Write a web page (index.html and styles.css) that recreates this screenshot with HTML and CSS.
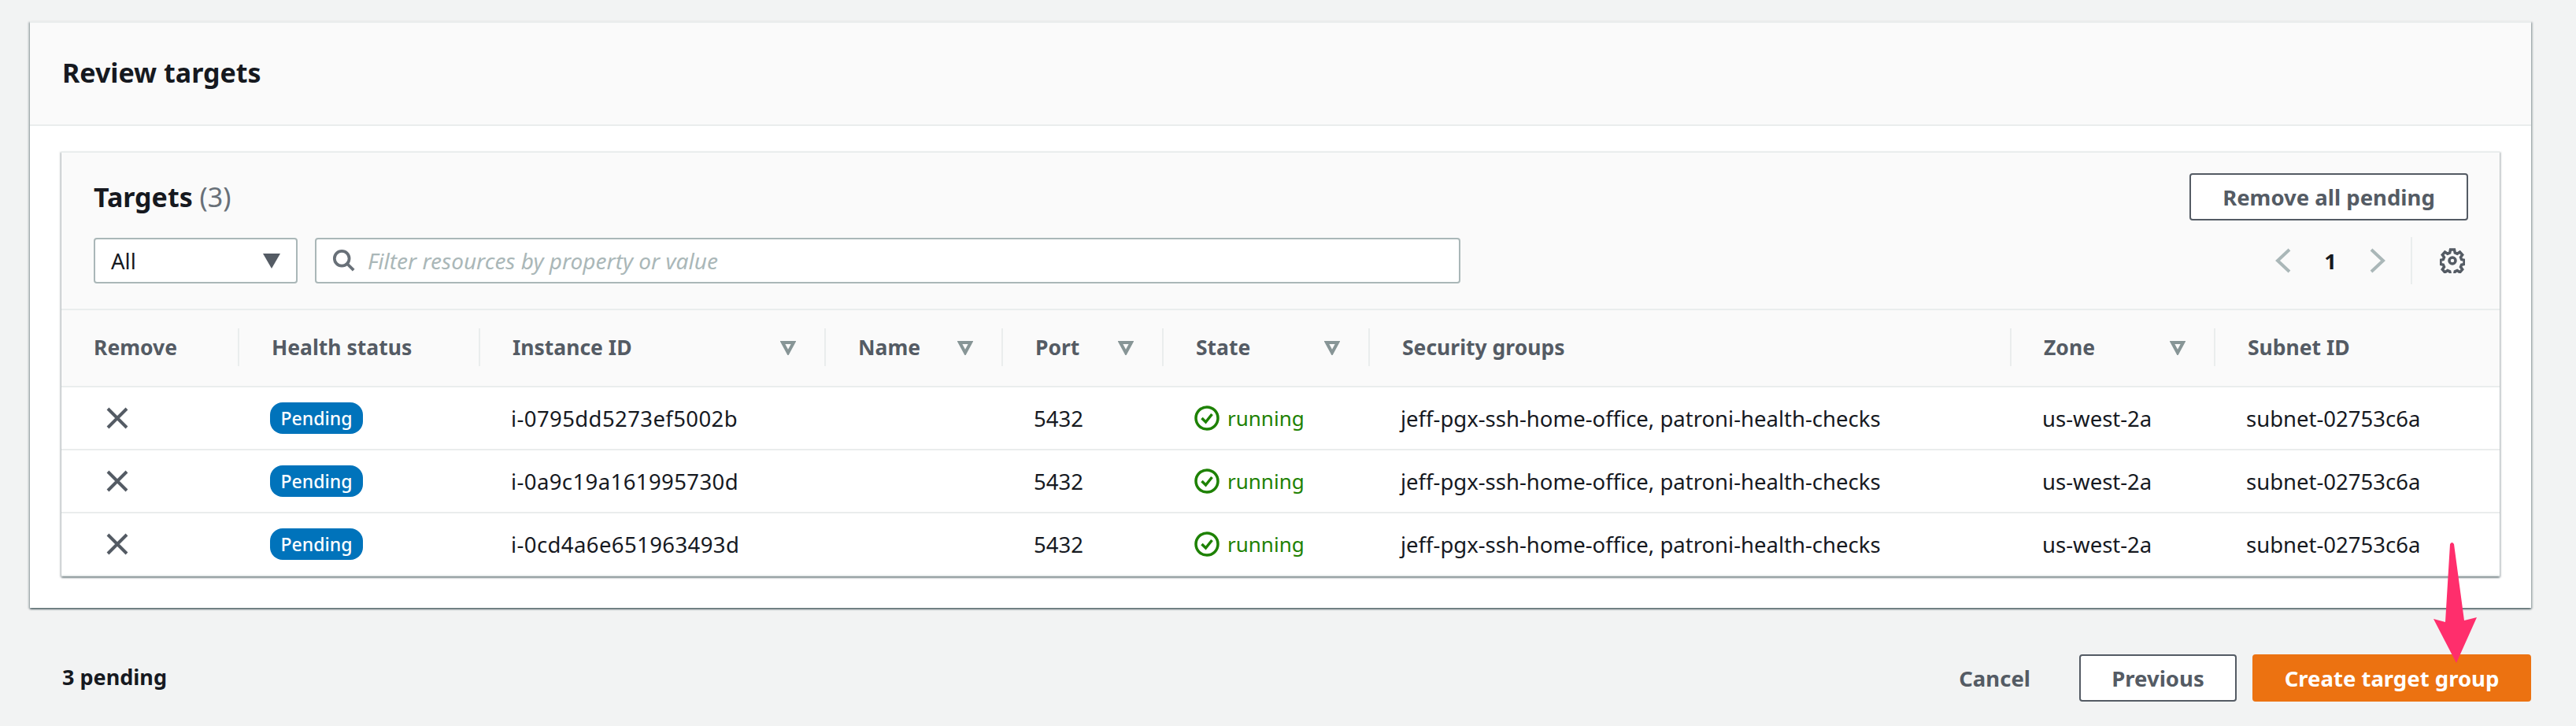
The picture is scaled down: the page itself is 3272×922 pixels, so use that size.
FILE: index.html
```html
<!DOCTYPE html>
<html lang="en">
<head>
    <meta charset="UTF-8">
    <title>Review targets</title>
    <link rel="stylesheet" href="styles.css">
</head>
<body>

    <section class="card">
        <h2 class="card-title">Review targets</h2>
        <div class="card-body">
            <div class="targets">
                <div class="toolbar">
                    <div class="toolbar-top">
                        <h3 class="targets-title">Targets <span class="count">(3)</span></h3>
                        <button class="btn btn-small">Remove all pending</button>
                    </div>
                    <div class="toolbar-bottom">
                        <div class="select">All<span class="select-caret"></span></div>
                        <div class="search">
                            <svg class="search-icon" viewBox="0 0 32 32"><circle cx="13" cy="13" r="10" /><path d="M20 20l9 9" /></svg>
                            <span class="placeholder">Filter resources by property or value</span>
                        </div>
                        <div class="pager">
                            <svg class="chevron" viewBox="0 0 20 32"><path d="M18 2L3 16l15 14" /></svg>
                            <span class="page-num">1</span>
                            <svg class="chevron" viewBox="0 0 20 32"><path d="M2 2l15 14L2 30" /></svg>
                            <span class="pager-sep"></span>
                            <svg class="gear" viewBox="0 0 32 32">
                                <path d="M13.5 2h5l.8 4 2.8 1.2 3.4-2.2 3.2 3.6-2.2 3.2 1.1 2.8 3.4.8v5l-3.4.8-1.1 2.8 2.2 3.2-3.2 3.6-3.4-2.2-2.8 1.2-.8 3.900h-5l-.8-3.900-2.8-1.2-3.4 2.2-3.2-3.6 2.2-3.2-1.1-2.8-3.4-.8v-5l3.400-.8 1.100-2.800-2.200-3.200 3.200-3.600 3.400 2.200 2.800-1.200z" />
                                <circle cx="16" cy="16" r="4" />
                            </svg>
                        </div>
                    </div>
                </div>
                <table class="table">
                    <colgroup>
                        <col class="col-remove">
                        <col class="col-health">
                        <col class="col-instance">
                        <col class="col-name">
                        <col class="col-port">
                        <col class="col-state">
                        <col class="col-groups">
                        <col class="col-zone">
                        <col class="col-subnet">
                    </colgroup>
                    <thead>
                        <tr>
                            <th><div class="th-in">Remove</div></th>
                            <th><div class="th-in">Health status</div></th>
                            <th><div class="th-in">Instance ID<svg class="sort" viewBox="0 0 20 20"><path d="M3 4h14l-7 13z" /></svg></div></th>
                            <th><div class="th-in">Name<svg class="sort" viewBox="0 0 20 20"><path d="M3 4h14l-7 13z" /></svg></div></th>
                            <th><div class="th-in">Port<svg class="sort" viewBox="0 0 20 20"><path d="M3 4h14l-7 13z" /></svg></div></th>
                            <th><div class="th-in">State<svg class="sort" viewBox="0 0 20 20"><path d="M3 4h14l-7 13z" /></svg></div></th>
                            <th><div class="th-in">Security groups</div></th>
                            <th><div class="th-in">Zone<svg class="sort" viewBox="0 0 20 20"><path d="M3 4h14l-7 13z" /></svg></div></th>
                            <th><div class="th-in th-last">Subnet ID</div></th>
                        </tr>
                    </thead>
                    <tbody>
                        <tr>
                            <td><svg class="remove" viewBox="0 0 28 28"><path d="M2 2l24 24M26 2L2 26" /></svg></td>
                            <td><span class="badge">Pending</span></td>
                            <td class="instance">i-0795dd5273ef5002b</td>
                            <td></td>
                            <td>5432</td>
                            <td><span class="state"><svg class="check" viewBox="0 0 32 32"><circle cx="16" cy="16" r="14" /><path d="M9.5 16l5 5 8-10" /></svg>running</span></td>
                            <td>jeff-pgx-ssh-home-office, patroni-health-checks</td>
                            <td>us-west-2a</td>
                            <td>subnet-02753c6a</td>
                        </tr>
                        <tr>
                            <td><svg class="remove" viewBox="0 0 28 28"><path d="M2 2l24 24M26 2L2 26" /></svg></td>
                            <td><span class="badge">Pending</span></td>
                            <td class="instance">i-0a9c19a161995730d</td>
                            <td></td>
                            <td>5432</td>
                            <td><span class="state"><svg class="check" viewBox="0 0 32 32"><circle cx="16" cy="16" r="14" /><path d="M9.5 16l5 5 8-10" /></svg>running</span></td>
                            <td>jeff-pgx-ssh-home-office, patroni-health-checks</td>
                            <td>us-west-2a</td>
                            <td>subnet-02753c6a</td>
                        </tr>
                        <tr>
                            <td><svg class="remove" viewBox="0 0 28 28"><path d="M2 2l24 24M26 2L2 26" /></svg></td>
                            <td><span class="badge">Pending</span></td>
                            <td class="instance">i-0cd4a6e651963493d</td>
                            <td></td>
                            <td>5432</td>
                            <td><span class="state"><svg class="check" viewBox="0 0 32 32"><circle cx="16" cy="16" r="14" /><path d="M9.5 16l5 5 8-10" /></svg>running</span></td>
                            <td>jeff-pgx-ssh-home-office, patroni-health-checks</td>
                            <td>us-west-2a</td>
                            <td>subnet-02753c6a</td>
                        </tr>
                    </tbody>
                </table>
            </div>
        </div>
    </section>

    <footer class="footer">
        <span class="pending">3 pending</span>
        <div class="actions">
            <span class="btn-link">Cancel</span>
            <button class="btn btn-prev">Previous</button>
            <button class="btn btn-primary">Create target group</button>
        </div>
    </footer>

    <!-- annotation arrow drawn on top of the screenshot -->
    <svg class="arrow" viewBox="0 0 60 156"><path d="M22 2Q24.500-2 27 2L40 99 56 95 30 153 1 97 16 101z" /></svg>

</body>
</html>
```

FILE: styles.css
```css
* {
    box-sizing: border-box;
}
body {
    margin: 0;
    height: 922px;
    overflow: hidden;
    background-color: #f2f3f3;
    color: #16191f;
    font-family: "Noto Sans", Roboto, sans-serif;
    font-size: 27.5px;
    padding: 27px 57px 0 38px;
    position: relative;
}
button {
    font-family: inherit;
}
.card {
    background-color: #fff;
    border-top: 2px solid #eaeded;
    box-shadow: 0 2px 2px rgba(0, 28, 36, 0.5), 2px 1px 2px rgba(0, 28, 36, 0.2), -2px 1px 2px rgba(0, 28, 36, 0.2);
    height: 745px;
}
.card-title {
    margin: 0;
    height: 131px;
    padding: 0 41px 3px 41px;
    display: flex;
    align-items: center;
    background-color: #fafafa;
    border-bottom: 2px solid #eaeded;
    font-size: 34px;
    font-weight: 700;
}
.card-body {
    padding: 32px 40px 0 40px;
}
.targets {
    border-top: 2px solid #eaeded;
    box-shadow: 0 2px 2px rgba(0, 28, 36, 0.4), 2px 1px 2px rgba(0, 28, 36, 0.15), -2px 1px 2px rgba(0, 28, 36, 0.15);
}
.toolbar {
    background-color: #fafafa;
    height: 198px;
    padding: 26px 40px 0 41px;
}
.toolbar-top {
    display: flex;
    justify-content: space-between;
    align-items: center;
    height: 60px;
}
.targets-title {
    margin: 0;
    font-size: 34px;
    font-weight: 700;
}
.count {
    font-weight: 400;
    color: #687078;
}
.btn {
    height: 60px;
    background-color: #fff;
    border: 2px solid #545b64;
    border-radius: 4px;
    color: #545b64;
    font-size: 27.5px;
    font-weight: 700;
}
.btn-small {
    width: 354px;
}
.toolbar-bottom {
    display: flex;
    align-items: center;
    margin-top: 21px;
}
.select {
    width: 259px;
    height: 58px;
    padding: 0 20px;
    display: flex;
    align-items: center;
    justify-content: space-between;
    background-color: #fff;
    border: 2px solid #aab7b8;
    border-radius: 4px;
}
.select-caret {
    width: 0;
    height: 0;
    border-left: 11px solid transparent;
    border-right: 11px solid transparent;
    border-top: 19px solid #545b64;
}
.search {
    width: 1455px;
    height: 58px;
    margin-left: 22px;
    padding: 0 20px;
    display: flex;
    align-items: center;
    gap: 15px;
    background-color: #fff;
    border: 2px solid #aab7b8;
    border-radius: 4px;
}
.search-icon {
    width: 30px;
    height: 30px;
    fill: none;
    stroke: #687078;
    stroke-width: 4;
}
.placeholder {
    font-size: 28px;
    font-style: italic;
    color: #aab7b8;
}
.pager {
    margin-left: auto;
    padding-right: 4px;
    display: flex;
    align-items: center;
}
.chevron {
    width: 20px;
    height: 32px;
    fill: none;
    stroke: #aab7b8;
    stroke-width: 4;
}
.page-num {
    width: 100px;
    text-align: center;
    font-weight: 700;
}
.pager-sep {
    width: 2px;
    height: 60px;
    margin: 0 35px 0 32px;
    background-color: #eaeded;
}
.gear {
    width: 32px;
    height: 32px;
    fill: none;
    stroke: #545b64;
    stroke-width: 3.5;
}
.table {
    width: 100%;
    border-collapse: collapse;
    table-layout: fixed;
}
.col-remove { width: 226px; }
.col-health { width: 306px; }
.col-instance { width: 439px; }
.col-name { width: 225px; }
.col-port { width: 204px; }
.col-state { width: 262px; }
.col-groups { width: 815px; }
.col-zone { width: 259px; }
th {
    height: 98px;
    padding: 0 0 3px 0;
    background-color: #fafafa;
    border-top: 2px solid #eaeded;
    border-bottom: 2px solid #eaeded;
    color: #545b64;
    font-size: 26.5px;
    font-weight: 700;
    text-align: left;
}
.th-in {
    height: 48px;
    padding: 0 36px 0 41px;
    display: flex;
    align-items: center;
    justify-content: space-between;
    border-right: 2px solid #eaeded;
}
.th-last {
    border-right: none;
}
.sort {
    width: 20px;
    height: 20px;
    fill: none;
    stroke: #879596;
    stroke-width: 4;
}
td {
    height: 80px;
    padding: 0 0 0 39px;
    border-bottom: 2px solid #eaeded;
    background-color: #fff;
    vertical-align: middle;
}
tbody tr td:first-child {
    padding-left: 57px;
}
.instance {
    letter-spacing: 0.4px;
}
.remove {
    display: block;
    width: 28px;
    height: 28px;
    fill: none;
    stroke: #545b64;
    stroke-width: 4;
}
.badge {
    display: inline-block;
    height: 40px;
    width: 118px;
    line-height: 40px;
    text-align: center;
    border-radius: 16px;
    background-color: #0073bb;
    color: #fff;
    font-size: 23px;
    font-weight: 500;
}
.state {
    display: flex;
    align-items: center;
    gap: 10px;
    color: #1d8102;
    font-size: 26px;
}
.check {
    width: 32px;
    height: 32px;
    fill: none;
    stroke: #1d8102;
    stroke-width: 3.5;
}
.footer {
    display: flex;
    justify-content: space-between;
    align-items: center;
    height: 60px;
    margin-top: 59px;
    padding-left: 41px;
}
.pending {
    font-size: 27px;
    font-weight: 700;
    margin-bottom: 3px;
}
.actions {
    display: flex;
    align-items: center;
}
.btn-link {
    color: #545b64;
    font-weight: 700;
    margin-right: 62px;
}
.btn-prev {
    width: 200px;
    margin-right: 20px;
}
.btn-primary {
    width: 354px;
    background-color: #ec7211;
    border-color: #ec7211;
    color: #fff;
}
.arrow {
    position: absolute;
    left: 3090px;
    top: 689px;
    width: 60px;
    height: 156px;
    fill: #ff2e6c;
}
```
